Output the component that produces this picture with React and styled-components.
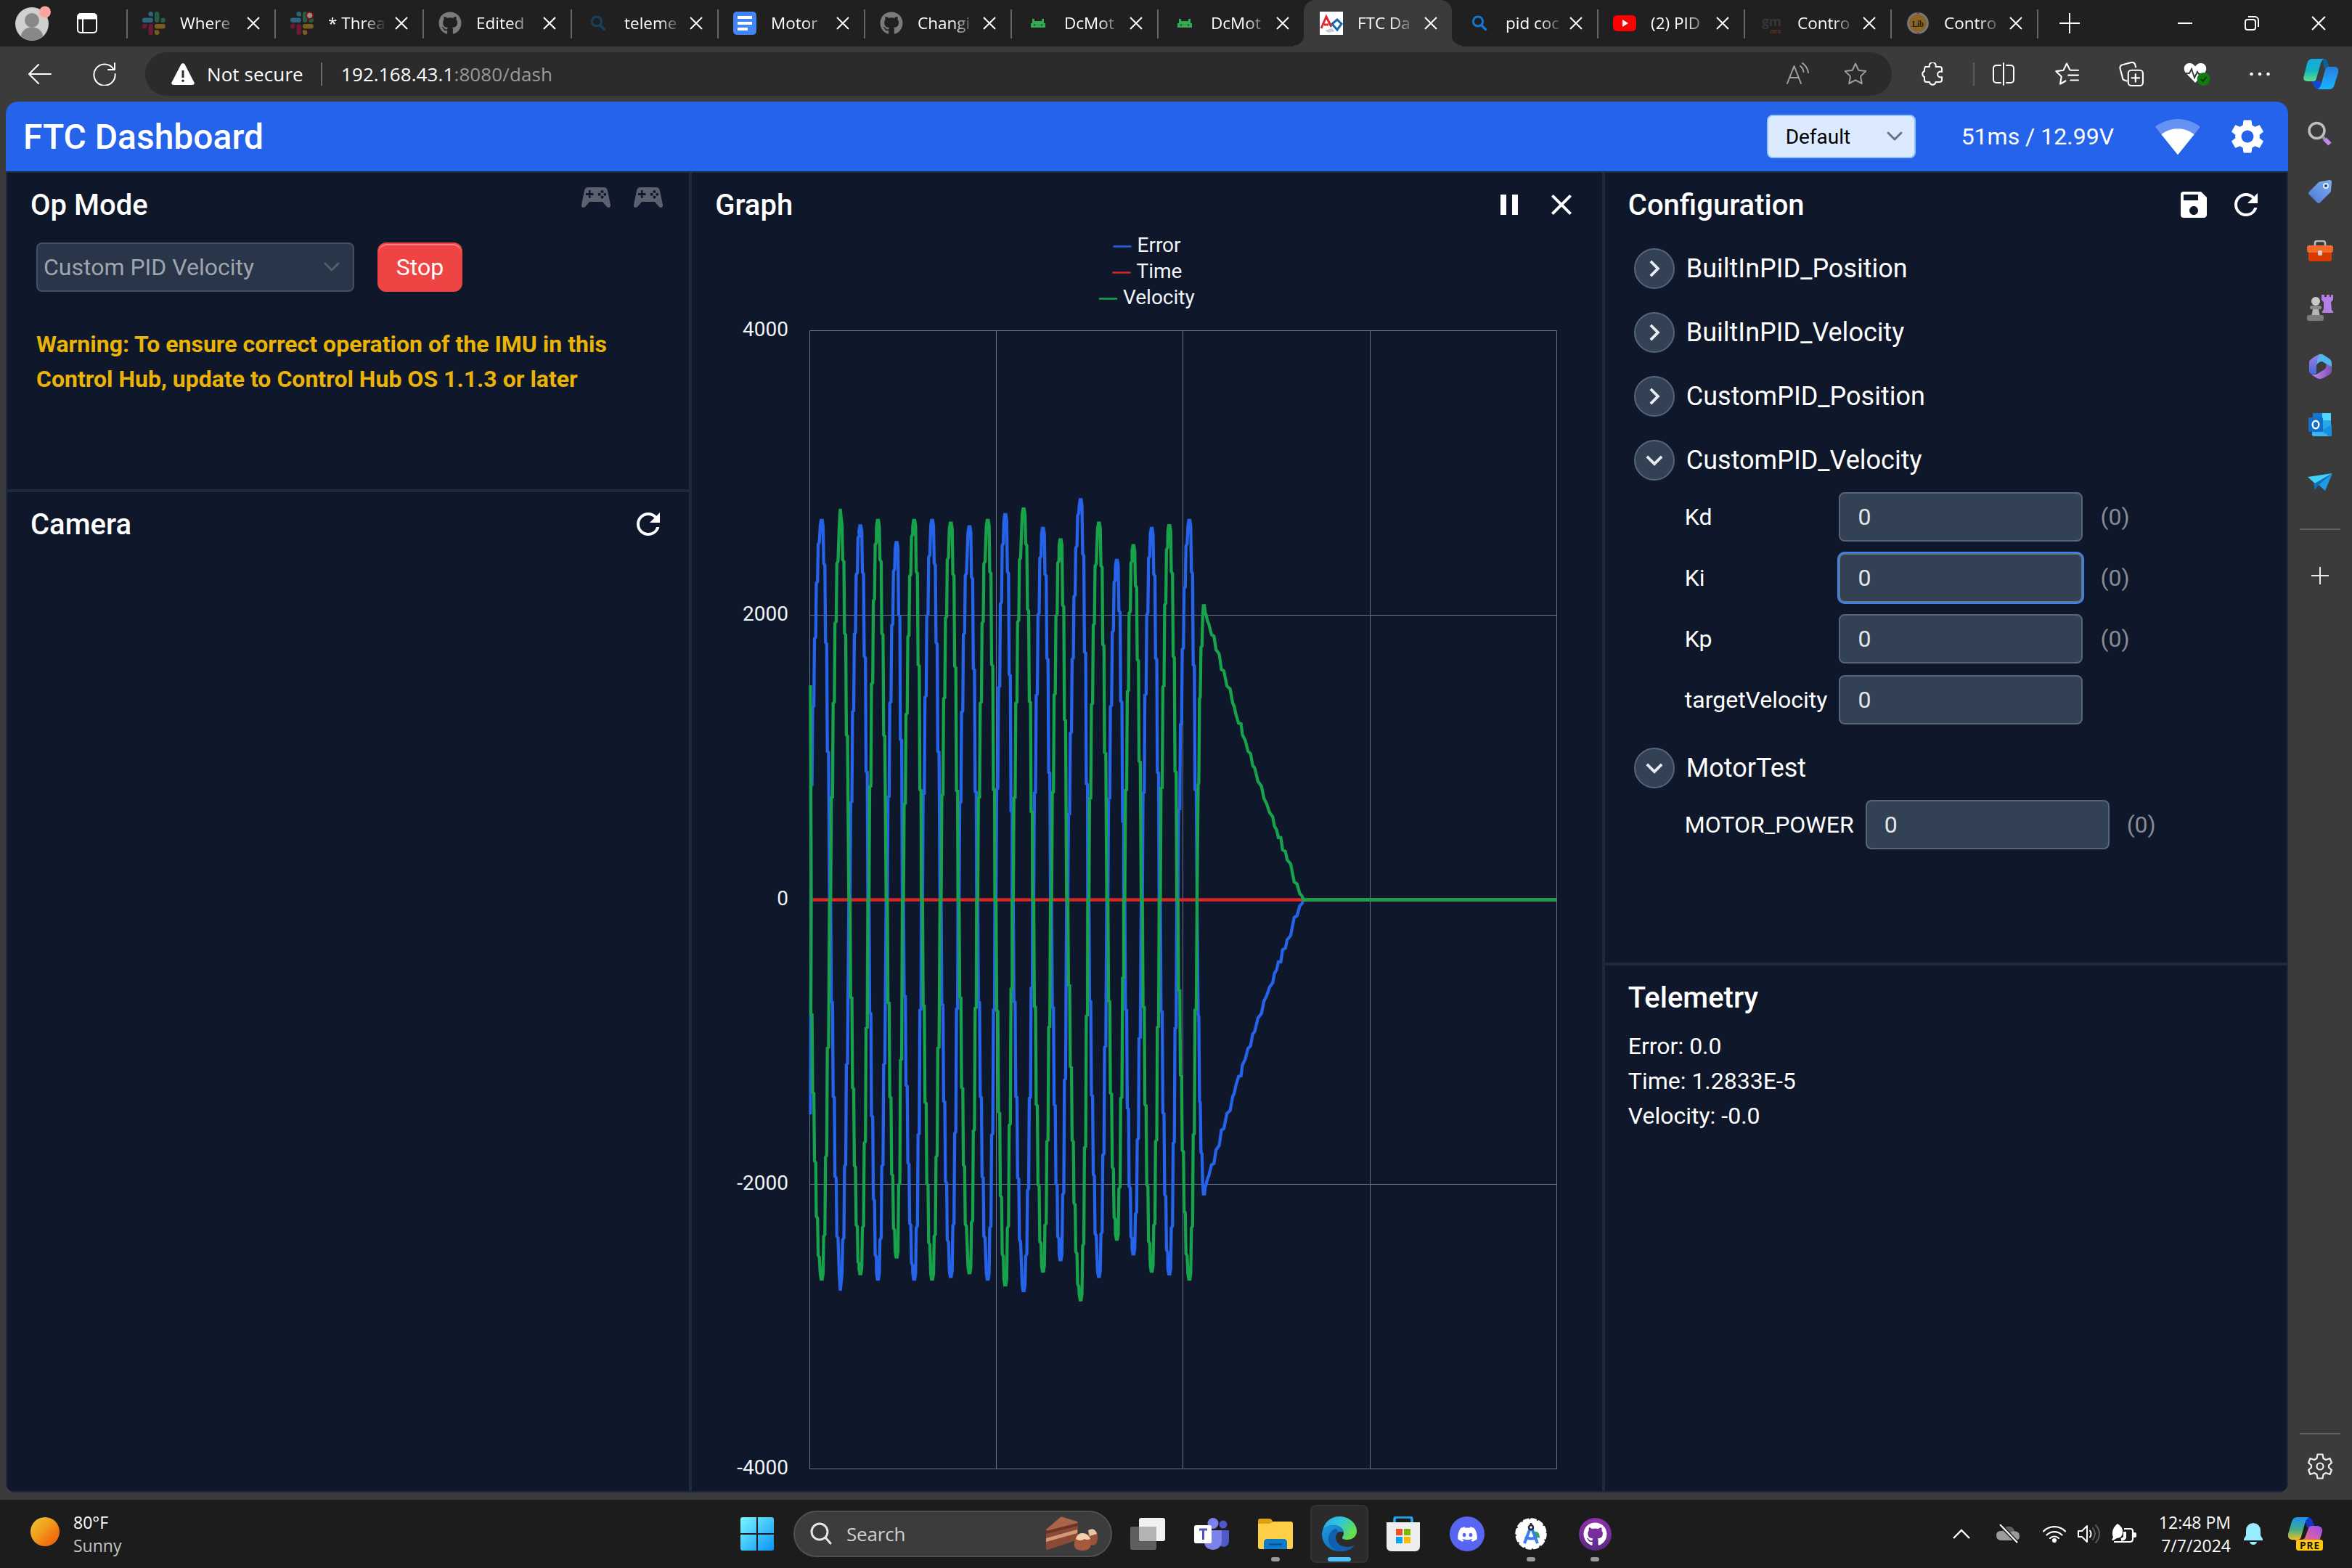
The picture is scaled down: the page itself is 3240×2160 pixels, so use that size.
import React from "react";
import styled, { createGlobalStyle, css } from "styled-components";
import {
  MdSettings,
  MdRefresh,
  MdSave,
  MdPause,
  MdClose,
  MdChevronRight,
  MdExpandMore,
} from "react-icons/md";
import { FaGithub, FaDiscord } from "react-icons/fa";

/* ---------- tokens ---------- */

const system = `"Segoe UI", "Open Sans", "Noto Sans", sans-serif`;
const roboto = `Roboto, "Liberation Sans", sans-serif`;

const c = {
  strip: "#202020",
  chrome: "#3b3b3b",
  field: "#2b2b2b",
  page: "#0f172a",
  line: "#1e293b",
  blue: "#2563eb",
  red: "#dc2626",
  green: "#16a34a",
  control: "#334155",
  controlLine: "#55657c",
  task: "#1c1c1c",
};

const Global = createGlobalStyle`
  *, *::before, *::after { box-sizing: border-box; }
  html, body { margin: 0; background: ${c.chrome}; overflow: hidden; }
  svg { display: block; flex: none; }
`;

const Screen = styled.div`
  width: 3240px;
  height: 2160px;
  display: flex;
  flex-direction: column;
  background: ${c.chrome};
  color: #fff;
  font-family: ${system};
`;

/* ---------- tab strip ---------- */

const Strip = styled.div`
  height: 64px;
  flex: none;
  display: flex;
  background: ${c.strip};
`;

const StripLead = styled.div`
  width: 174px;
  display: flex;
  align-items: center;
  padding-left: 20px;
  gap: 36px;
`;

const TabItem = styled.div`
  position: relative;
  width: ${(p) => p.$w}px;
  display: flex;
  align-items: center;
  padding: 0 20px 0 22px;
  ${(p) =>
    p.$active &&
    css`
      background: ${c.chrome};
      border-radius: 16px 16px 0 0;
      &::before,
      &::after {
        content: "";
        position: absolute;
        bottom: 0;
        width: 14px;
        height: 16px;
      }
      &::before {
        left: -14px;
        background: radial-gradient(circle at 0 0, transparent 14px, ${c.chrome} 15px);
      }
      &::after {
        right: -14px;
        background: radial-gradient(circle at 100% 0, transparent 14px, ${c.chrome} 15px);
      }
    `}
  ${(p) =>
    p.$rule &&
    css`
      background: linear-gradient(#666, #666) 0 13px / 2px 40px no-repeat;
    `}
`;

const TabLabel = styled.div`
  flex: 1;
  min-width: 0;
  margin: 0 12px 0 20px;
  white-space: nowrap;
  font-size: 22.5px;
  line-height: 32px;
  mask-image: linear-gradient(90deg, #000 48px, transparent 80px);
`;

const StripTail = styled.div`
  flex: 1;
  display: flex;
  align-items: center;
  background: linear-gradient(#666, #666) 0 13px / 2px 40px no-repeat;
`;

const WindowButtons = styled.div`
  margin-left: auto;
  display: flex;
  & > span {
    width: 92px;
    height: 64px;
    display: grid;
    place-items: center;
  }
`;

const NewTab = styled.span`
  width: 90px;
  display: grid;
  place-items: center;
`;

const CloseX = ({ size = 18, w = 2 }) => (
  <svg width={size} height={size} viewBox="0 0 18 18" stroke="#fff" strokeWidth={w} fill="none">
    <path d="M1 1 17 17M17 1 1 17" />
  </svg>
);

const Slack = ({ badge }) => (
  <svg width="32" height="32" viewBox="0 0 54 54">
    <path fill="#2b677c" d="M19.712.133a5.381 5.381 0 0 0-5.376 5.387 5.381 5.381 0 0 0 5.376 5.386h5.376V5.52A5.381 5.381 0 0 0 19.712.133m0 14.365H5.376A5.381 5.381 0 0 0 0 19.884a5.381 5.381 0 0 0 5.376 5.387h14.336a5.381 5.381 0 0 0 5.376-5.387 5.381 5.381 0 0 0-5.376-5.386" />
    <path fill="#245f45" d="M53.76 19.884a5.381 5.381 0 0 0-5.376-5.386 5.381 5.381 0 0 0-5.376 5.386v5.387h5.376a5.381 5.381 0 0 0 5.376-5.387m-14.336 0V5.52A5.381 5.381 0 0 0 34.048.133a5.381 5.381 0 0 0-5.376 5.387v14.364a5.381 5.381 0 0 0 5.376 5.387 5.381 5.381 0 0 0 5.376-5.387" />
    <path fill="#7a5c20" d="M34.048 54a5.381 5.381 0 0 0 5.376-5.387 5.381 5.381 0 0 0-5.376-5.386h-5.376v5.386A5.381 5.381 0 0 0 34.048 54m0-14.365h14.336a5.381 5.381 0 0 0 5.376-5.386 5.381 5.381 0 0 0-5.376-5.387H34.048a5.381 5.381 0 0 0-5.376 5.387 5.381 5.381 0 0 0 5.376 5.386" />
    <path fill="#6f1938" d="M0 34.249a5.381 5.381 0 0 0 5.376 5.386 5.381 5.381 0 0 0 5.376-5.386v-5.387H5.376A5.381 5.381 0 0 0 0 34.25m14.336-.001v14.364A5.381 5.381 0 0 0 19.712 54a5.381 5.381 0 0 0 5.376-5.387V34.25a5.381 5.381 0 0 0-5.376-5.387 5.381 5.381 0 0 0-5.376 5.387" />
    {badge && <circle cx="45" cy="9" r="8" fill="#909090" stroke="#7c1416" strokeWidth="4" />}
  </svg>
);

const SearchFav = ({ color }) => (
  <svg width="32" height="32" viewBox="0 0 32 32" fill="none" stroke={color} strokeWidth="3">
    <circle cx="14" cy="13.5" r="6.6" />
    <path d="m18.5 18.5 7 7" strokeWidth="3.4" />
  </svg>
);

const Docs = () => (
  <svg width="32" height="32" viewBox="0 0 32 32">
    <rect width="32" height="32" rx="5" fill="#4285f4" />
    <path d="M6 8h20M6 16h20M6 24h14" stroke="#fff" strokeWidth="4" />
  </svg>
);

const Android = () => (
  <svg width="32" height="32" viewBox="0 0 32 32" fill="#34a853">
    <path d="M8 10h3v3h10v-3h3v6h2v6H6v-6h2z" />
    <path d="M11 17v3M21 17v3" stroke="#1d6b35" strokeWidth="2" />
  </svg>
);

const Ftc = () => (
  <svg width="32" height="32" viewBox="0 0 32 32" fill="none">
    <rect width="32" height="32" fill="#fff" />
    <path d="M7 26 17 23l4 4-9 2z" fill="#c9cdd2" />
    <path d="M2 23 9 7l7 14M6 18h6" stroke="#e0262c" strokeWidth="3" />
    <path d="m24 11 6 6-6 8-7-8z" stroke="#1466ad" strokeWidth="3" />
  </svg>
);

const YouTube = () => (
  <svg width="32" height="32" viewBox="0 0 32 32">
    <rect y="5" width="32" height="22" rx="6" fill="#f00" />
    <path d="m13 11 8 5-8 5z" fill="#fff" />
  </svg>
);

const Gm = () => (
  <svg width="32" height="32" viewBox="0 0 32 32" fontFamily="Open Sans, sans-serif" fontWeight="700">
    <text x="3" y="20" fontSize="18" textLength="27" lengthAdjust="spacingAndGlyphs" fill="#373737">gm</text>
    <text x="14" y="30" fontSize="8" textLength="15" lengthAdjust="spacingAndGlyphs" fill="#5c3420">zero</text>
  </svg>
);

const Lib = () => (
  <svg width="32" height="32" viewBox="0 0 32 32" fontFamily="Liberation Serif, serif" fontWeight="700">
    <circle cx="16" cy="16" r="13.4" fill="#8b6426" stroke="#777" strokeWidth="3" />
    <text x="8" y="21" fontSize="13" textLength="16" lengthAdjust="spacingAndGlyphs" fill="#211a10">Lib</text>
    <path d="m16 0 2 3h-4zM16 32l2-3h-4z" fill="#7c3434" />
  </svg>
);

const GithubFav = () => <FaGithub size={32} color="#7b7b7b" />;

const tabs = [
  { icon: <Slack />, label: "Where", w: 204 },
  { icon: <Slack badge />, label: "* Threa", w: 204 },
  { icon: <GithubFav />, label: "Edited", w: 204 },
  { icon: <SearchFav color="#17415f" />, label: "teleme", w: 202 },
  { icon: <Docs />, label: "Motor", w: 202 },
  { icon: <GithubFav />, label: "Changi", w: 202 },
  { icon: <Android />, label: "DcMot", w: 202 },
  { icon: <Android />, label: "DcMot", w: 202 },
  { icon: <Ftc />, label: "FTC Da", w: 204, active: true },
  { icon: <SearchFav color="#1177cf" />, label: "pid coc", w: 200 },
  { icon: <YouTube />, label: "(2) PID", w: 202 },
  { icon: <Gm />, label: "Contro", w: 202 },
  { icon: <Lib />, label: "Contro", w: 202 },
];

const TabStrip = () => (
  <Strip>
    <StripLead>
      <svg width="50" height="50" viewBox="0 0 50 50">
        <circle cx="24" cy="26" r="23" fill="#d2d0ce" />
        <circle cx="24" cy="21" r="10" fill="#8a8886" />
        <path d="M9 43a15 12.500 0 0 1 30 0 23 23 0 0 1-30 0" fill="#8a8886" />
        <circle cx="42" cy="9.500" r="8" fill="#faa69f" />
      </svg>
      <svg width="28" height="28" viewBox="0 0 28 28" fill="none" stroke="#fff" strokeWidth="2">
        <rect x="1" y="1" width="26" height="26" rx="4" />
        <path d="M2 5h24" strokeWidth="7" />
        <path d="M8 8v19" />
      </svg>
    </StripLead>
    {tabs.map((t, i) => (
      <TabItem key={i} $w={t.w} $active={t.active} $rule={!t.active && !tabs[i - 1]?.active}>
        {t.icon}
        <TabLabel>{t.label}</TabLabel>
        <CloseX />
      </TabItem>
    ))}
    <StripTail>
      <NewTab>
        <svg width="28" height="28" viewBox="0 0 28 28" stroke="#fff" strokeWidth="2">
          <path d="M14 0v28M0 14h28" />
        </svg>
      </NewTab>
      <WindowButtons>
        <span>
          <svg width="20" height="20" viewBox="0 0 20 20" stroke="#fff" strokeWidth="2">
            <path d="M0 10h20" />
          </svg>
        </span>
        <span>
          <svg width="20" height="20" viewBox="0 0 20 20" fill="none" stroke="#fff" strokeWidth="2">
            <rect x="1" y="5" width="14" height="14" rx="3" />
            <path d="M5 1h9a5 5 0 0 1 5 5v9" />
          </svg>
        </span>
        <span>
          <CloseX size={20} w={1.9} />
        </span>
      </WindowButtons>
    </StripTail>
  </Strip>
);

/* ---------- toolbar ---------- */

const Bar = styled.div`
  height: 76px;
  flex: none;
  display: flex;
  align-items: center;
`;

const BarCell = styled.div`
  width: ${(p) => p.$w}px;
  display: grid;
  place-items: center;
`;

const Address = styled.div`
  width: 2407px;
  height: 60px;
  border-radius: 30px;
  background: ${c.field};
  display: flex;
  align-items: center;
  padding: 0 11px 0 36px;
  font-size: 26px;
`;

const Secure = styled.span`
  width: 158px;
  margin-left: 17px;
  margin-right: -1px;
  white-space: nowrap;
  letter-spacing: 0.1px;
`;

const Upright = styled.i`
  width: 2px;
  height: 32px;
  background: ${(p) => p.$color || "#6b6b6b"};
`;

const Url = styled.span`
  flex: 1;
  margin-left: 26px;
  letter-spacing: 0.1px;
  em {
    font-style: normal;
    color: #9a9a9a;
  }
`;

const starPath = "M16 1.6l4.300 9.200 10 1.300-7.300 7 1.800 10.100L16 24.400l-8.800 4.800L9 19.100l-7.300-7 10-1.300z";

const Line32 = ({ children, color = "#fff", w = 2, size = 32 }) => (
  <svg width={size} height={size} viewBox="0 0 32 32" fill="none" stroke={color} strokeWidth={w} strokeLinecap="round" strokeLinejoin="round">
    {children}
  </svg>
);

const CopilotMark = () => (
  <svg width="50" height="44" viewBox="0 0 50 44">
    <defs>
      <linearGradient id="cpA" x1="0" y1="0" x2="0" y2="1">
        <stop offset="0" stopColor="#15a8e6" />
        <stop offset=".5" stopColor="#12b5c4" />
        <stop offset="1" stopColor="#5fdc8a" />
      </linearGradient>
      <linearGradient id="cpB" x1="0" y1="0" x2="0" y2="1">
        <stop offset="0" stopColor="#2a7de0" />
        <stop offset="1" stopColor="#17b5fb" />
      </linearGradient>
    </defs>
    <path d="M28 1c5 0 6 3 7 6l2 6-8 1z" fill="#0f5f98" />
    <path d="M12 31h10c2 0 3 1 4 3l-2 9h-3c-4 0-6-5-9-12" fill="#1947d1" />
    <path d="M13 1h17c-4 1-5 6-7 13l-4 14c-1 3-2 4-5 4H7c-5 0-7-3-5-8L6 8c1-4 3-7 7-7" fill="url(#cpA)" />
    <path d="M37 43H20c4-1 5-5 7-12l4-15c1-3 2-4 5-4h7c5 0 7 3 6 8l-5 16c-1 4-3 7-7 7" fill="url(#cpB)" />
  </svg>
);

const Toolbar = () => (
  <Bar>
    <BarCell $w={110}>
      <svg width="32" height="28" viewBox="0 0 32 28" fill="none" stroke="#fff" strokeWidth="2" strokeLinecap="round" strokeLinejoin="round">
        <path d="M31 14H1M14 1 1 14l13 13" />
      </svg>
    </BarCell>
    <BarCell $w={68}>
      <Line32>
        <path d="M28.500 9.500A14.600 14.600 0 1 0 30.600 16M30 1v9h-9" />
      </Line32>
    </BarCell>
    <BarCell $w={22} />
    <Address>
      <svg width="32" height="30" viewBox="0 0 32 30">
        <path d="M13.500 1.500a3 3 0 0 1 5 0l13 25a2.400 2.400 0 0 1-2 3.500h-27a2.400 2.400 0 0 1-2-3.500z" fill="#fff" />
        <path d="M16 10v10" stroke={c.field} strokeWidth="3" />
        <circle cx="16" cy="24.200" r="1.800" fill={c.field} />
      </svg>
      <Secure>Not secure</Secure>
      <Upright />
      <Url>
        192.168.43.1<em>:8080/dash</em>
      </Url>
      <BarCell $w={79}>
        <Line32 color="#a0a0a0">
          <path d="M1 29 10.500 5 20 29M4.500 21h12M19 5q4 3 4.500 8M22 1q7 5 8 13" />
        </Line32>
      </BarCell>
      <BarCell $w={79}>
        <Line32 color="#a0a0a0">
          <path d={starPath} />
        </Line32>
      </BarCell>
    </Address>
    <BarCell $w={112}>
      <Line32>
        <path d="M6 6h6a4.500 4.500 0 1 1 8.500 0H26a3 3 0 0 1 3 3v4a4 4 0 1 0 0 7v4a3 3 0 0 1-3 3h-5.500a4.300 4.300 0 0 1-8.500 0H8a3 3 0 0 1-3-3v-4a4.300 4.300 0 0 1 0-8V9z" />
      </Line32>
    </BarCell>
    <Upright $color="#5c5c5c" />
    <BarCell $w={80}>
      <Line32>
        <path d="M12 4H6a4 4 0 0 0-4 4v16a4 4 0 0 0 4 4h6M20 4h6a4 4 0 0 1 4 4v16a4 4 0 0 1-4 4h-6M16 1v30" />
      </Line32>
    </BarCell>
    <BarCell $w={94}>
      <Line32 size={34}>
        <path d="M20 10.500 16 2.200l-4.200 8.900-9.600 1.300 7 6.800-1.700 9.700 7-4M21 11h10M18 17.500h13M21 24h10" />
      </Line32>
    </BarCell>
    <BarCell $w={84}>
      <Line32 size={34}>
        <rect x="12" y="11" width="19" height="20" rx="4" />
        <path d="M21.500 16v10M16.500 21h10M10 25l-3-1a4 4 0 0 1-2.500-4L1.500 9a4 4 0 0 1 3-5L16 1a4 4 0 0 1 5 3l.8 3" />
      </Line32>
    </BarCell>
    <BarCell $w={95}>
      <svg width="38" height="34" viewBox="0 0 38 34">
        <path d="M17 29 4 15.500C-1 9 3 2 9 2c4 0 6 2 8 4.500C19 4 21 2 25 2c6 0 10 7 5 13.500z" fill="#fff" />
        <path d="M1 16h8l3-6 4 12 4-8 2 3h10" fill="none" stroke={c.chrome} strokeWidth="2" />
        <circle cx="28.500" cy="24" r="9" fill="#107c10" />
        <path d="m24.500 24 3 3 5-6" fill="none" stroke="#0a3d0a" strokeWidth="2" />
      </svg>
    </BarCell>
    <BarCell $w={80}>
      <Line32>
        <path d="M4.500 16h.01M16 16h.01M27.500 16h.01" strokeWidth="4.600" />
      </Line32>
    </BarCell>
    <BarCell $w={87}>
      <CopilotMark />
    </BarCell>
  </Bar>
);

/* ---------- dashboard ---------- */

const Body = styled.div`
  height: 1926px;
  flex: none;
  display: flex;
  padding: 0 0 10px 8px;
`;

const Dash = styled.div`
  width: 3144px;
  height: 1916px;
  display: flex;
  flex-direction: column;
  border-radius: 16px 16px 14px 14px;
  overflow: hidden;
  background: ${c.page};
  font-family: ${roboto};
`;

const DashHeader = styled.header`
  height: 96px;
  flex: none;
  display: flex;
  align-items: center;
  padding: 0 28px 0 24px;
  background: ${c.blue};
  h1 {
    margin: 0;
    flex: 1;
    font-size: 48px;
    font-weight: 500;
  }
`;

const Picker = styled.div`
  display: flex;
  align-items: center;
  justify-content: space-between;
  border-radius: 8px;
  ${(p) =>
    p.$dark
      ? css`
          width: 438px;
          height: 68px;
          padding: 0 17px 0 8px;
          font-size: 32px;
          color: #9fa5ae;
          background: #293548;
          border: 2px solid #444f61;
        `
      : css`
          width: 205px;
          height: 60px;
          padding: 0 15px 0 24px;
          font-size: 28px;
          color: #000;
          background: #dbeafe;
          border: 2px solid #93c5fd;
        `}
`;

const Ping = styled.span`
  margin: 0 56px 0 63px;
  font-size: 32px;
`;

const Columns = styled.div`
  flex: 1;
  min-height: 0;
  display: grid;
  grid-template-columns: 30% 40% 30%;
`;

const Column = styled.div`
  display: flex;
  flex-direction: column;
  min-height: 0;
`;

const Panel = styled.section`
  border: 2px solid ${c.line};
  padding: 16px 32px 0;
  ${(p) => (p.$h ? `height: ${p.$h}px; flex: none;` : "flex: 1; min-height: 0;")}
`;

const PanelHead = styled.div`
  height: 56px;
  display: flex;
  align-items: center;
  gap: 24px;
  h2 {
    margin: 0;
    flex: 1;
    font-size: 40px;
    font-weight: 500;
  }
`;

const Pads = styled.div`
  display: flex;
  gap: 32px;
  margin: -20px 4px 0 0;
`;

const OpRow = styled.div`
  display: flex;
  gap: 32px;
  padding: 24px 8px 0;
`;

const StopButton = styled.button`
  width: 117px;
  height: 68px;
  border: 2px solid #ef4444;
  border-radius: 12px;
  background: #ef4444;
  box-shadow: inset 0 2px 0 #fb8080;
  color: #fff;
  font: 400 32px ${roboto};
  padding: 0;
`;

const Warning = styled.p`
  margin: 48px 0 0 8px;
  width: 800px;
  font-size: 32px;
  line-height: 48px;
  font-weight: 700;
  color: #eab308;
`;

const Caret = ({ color }) => (
  <svg width="24" height="16" viewBox="0 0 24 16" fill="none" stroke={color} strokeWidth="3" strokeLinecap="round" strokeLinejoin="round">
    <path d="m3 3 9 9 9-9" />
  </svg>
);

const Gamepad = () => (
  <svg width="40" height="28" viewBox="0 0 40 28">
    <path
      fillRule="evenodd"
      fill="#5a606d"
      d="M9 0h22c3 0 4.500 2 5 5l4 19c.3 2-.5 4-2.500 4-1.500 0-2.500-1-3.500-2l-5-6H11l-5 6c-1 1-2 2-3.500 2C.5 28-.3 26 0 24L4 5C4.500 2 6 0 9 0m1 4v4H6v3h4v4h2.500v-4h4V8h-4V4zm18.500 0a2 2 0 1 0 0 4 2 2 0 0 0 0-4m-3.800 3.800a2 2 0 1 0 0 4 2 2 0 0 0 0-4m7.600 0a2 2 0 1 0 0 4 2 2 0 0 0 0-4m-3.800 3.700a2 2 0 1 0 0 4 2 2 0 0 0 0-4"
    />
  </svg>
);

/* ---------- graph ---------- */

const GraphBox = styled.div`
  margin: 2px 0 0 -32px;
  width: 1253px;
  height: 1730px;
`;

/* Velocity trace: alternating zero crossings and extremes, in trace units. */
const crossings = [71, 131, 186, 240, 292, 338, 392, 445, 496, 549, 601, 650, 708, 759, 805, 865, 919, 967, 1017, 1068, 1118, 1174];
const extremes = [
  [107, -1366], [161, 1366], [217, -1346], [267, 1366], [320, -1286], [370, 1366], [421, -1366],
  [474, 1356], [527, -1343], [579, 1366], [629, -1387], [681, 1407], [736, -1337], [786, 1296],
  [843, -1440], [895, 1356], [946, -1222], [993, 1275], [1045, -1337], [1095, 1347], [1152, -1366],
];
const runDown = [
  [1174, 0], [1177, 414], [1179, 420], [1181, 724], [1183, 730], [1185, 909], [1188, 914], [1190, 1024], [1192, 1059],
  [1195, 1059], [1197, 1034], [1200, 1024], [1204, 1002], [1207, 995], [1215, 954], [1222, 949], [1228, 900], [1233, 892],
  [1237, 884], [1243, 829], [1250, 824], [1259, 769], [1268, 759], [1275, 709], [1280, 695], [1284, 670], [1292, 636],
  [1299, 634], [1303, 594], [1311, 574], [1319, 534], [1326, 526], [1332, 484], [1338, 474], [1347, 426], [1357, 409],
  [1364, 365], [1372, 345], [1380, 314], [1389, 299], [1394, 265], [1400, 252], [1405, 224], [1412, 224], [1417, 180],
  [1425, 174], [1430, 144], [1440, 129], [1450, 64], [1458, 57], [1466, 22], [1472, 14], [1476, 0], [2195, 0],
];

function buildTrace() {
  const pts = [[75, 772], [77, 0]];
  const wave = (x) => {
    for (let i = 0; i < extremes.length; i++) {
      const [ex, amp] = extremes[i];
      const a = crossings[i];
      const b = crossings[i + 1];
      if (x >= a && x <= b) {
        const t = x < ex ? (ex - x) / (ex - a) : (x - ex) / (b - ex);
        return amp * Math.cos((t * Math.PI) / 2);
      }
    }
    return 0;
  };
  for (let i = 0; i < extremes.length; i++) {
    const [ex, amp] = extremes[i];
    const from = Math.max(crossings[i], 78);
    const to = crossings[i + 1];
    for (let x = from; x < ex - 5; x += 5.2) {
      pts.push([x - 1.7, wave(x)], [x + 1.7, wave(x) * 1.006]);
    }
    pts.push([ex - 4, amp * 0.985]);
    if (i === 1) {
      pts.push([ex - 1, amp * 1.03]);
    } else {
      pts.push([ex - 1.5, amp], [ex + 1.5, amp]);
    }
    pts.push([ex + 4, amp * 0.985]);
    for (let x = ex + 7.5; x < to - 2; x += 5.2) {
      pts.push([x - 1.7, wave(x) * 1.006], [x + 1.7, wave(x)]);
    }
  }
  return pts.concat(runDown);
}

const trace = buildTrace();
const ORIGIN_X = 953;
const ORIGIN_Y = 312;
const ZERO = 1239.5 - ORIGIN_Y;
const toPath = (sign) =>
  trace
    .map(([x, v], i) => {
      const px = Math.min(1080 + x / 2.0632, 2144) - ORIGIN_X;
      const py = ZERO - (sign * v) / 2.6133;
      return `${i ? "L" : "M"}${px.toFixed(1)} ${py.toFixed(1)}`;
    })
    .join("");

const gridX = [0, 1, 2, 3, 4].map((i) => Math.round(1115 - ORIGIN_X + i * 257.2) + 0.5);
const gridY = [4000, 2000, 0, -2000, -4000].map((v) => ({ v, y: ZERO - (v * 392) / 2000 }));

const legend = [
  { name: "Error", color: c.blue, w: 60 },
  { name: "Time", color: c.red, w: 62 },
  { name: "Velocity", color: c.green, w: 99 },
];

const Chart = () => (
  <svg width="1253" height="1730" viewBox="0 0 1253 1730" fontFamily={roboto} fontSize="28" fill="#f1f5f9">
    {legend.map((l, i) => {
      const left = 627 - (l.w + 33) / 2;
      return (
        <g key={l.name}>
          <path d={`M${left} ${27.5 + i * 36}h25`} stroke={l.color} strokeWidth="2.5" />
          <text x={left + 33} y={35 + i * 36}>{l.name}</text>
        </g>
      );
    })}
    <g stroke="#64748b" strokeWidth="1">
      {gridX.map((x) => (
        <path key={x} d={`M${x} ${gridY[0].y}V${gridY[4].y}`} />
      ))}
      {gridY.map((g) => (
        <path key={g.v} d={`M${gridX[0]} ${g.y}H${gridX[4]}`} />
      ))}
    </g>
    {gridY.map((g) => (
      <text key={g.v} x="133" y={g.y + 7.5} textAnchor="end">{g.v}</text>
    ))}
    <g fill="none" strokeWidth="4.3" strokeLinejoin="miter" strokeMiterlimit="5">
      <path d={toPath(-1)} stroke={c.blue} />
      <path d={`M${gridX[0]} ${ZERO}H${gridX[4]}`} stroke={c.red} />
      <path d={toPath(1)} stroke={c.green} />
    </g>
  </svg>
);

/* ---------- configuration ---------- */

const Sections = styled.div`
  display: flex;
  flex-direction: column;
  padding: 32px 0 0 8px;
`;

const SectionHead = styled.div`
  height: 56px;
  display: flex;
  align-items: center;
  gap: 16px;
  font-size: 36px;
  margin-bottom: ${(p) => (p.$open ? 8 : 32)}px;
`;

const Round = styled.span`
  width: 56px;
  height: 56px;
  border-radius: 50%;
  border: 2px solid ${c.controlLine};
  background: ${c.control};
  color: #e8edf3;
  display: grid;
  place-items: center;
`;

const Vars = styled.div`
  display: grid;
  grid-template-columns: max-content 336px auto;
  grid-auto-rows: 84px;
  align-items: center;
  margin: 0 0 24px 70px;
  font-size: 32px;
`;

const VarName = styled.span`
  padding-right: 16px;
`;

const Field = styled.span`
  height: 68px;
  display: flex;
  align-items: center;
  padding-left: 24px;
  border-radius: 8px;
  border: 2px solid ${c.controlLine};
  background: ${c.control};
  color: #e5e7eb;
  ${(p) => p.$focus && `border-color: #64748b; box-shadow: 0 0 0 2px #3b82f6;`}
`;

const Default = styled.span`
  padding-left: 24px;
  color: #868b95;
`;

const config = [
  { name: "BuiltInPID_Position" },
  { name: "BuiltInPID_Velocity" },
  { name: "CustomPID_Position" },
  {
    name: "CustomPID_Velocity",
    vars: [
      { name: "Kd", value: "0", initial: "(0)" },
      { name: "Ki", value: "0", initial: "(0)", focus: true },
      { name: "Kp", value: "0", initial: "(0)" },
      { name: "targetVelocity", value: "0", initial: "" },
    ],
  },
  { name: "MotorTest", vars: [{ name: "MOTOR_POWER", value: "0", initial: "(0)" }] },
];

const Telemetry = styled.div`
  padding-top: 15px;
  font-size: 32px;
  line-height: 48px;
`;

const Dashboard = () => (
  <Dash>
    <DashHeader>
      <h1>FTC Dashboard</h1>
      <Picker>
        Default
        <Caret color="#6b7280" />
      </Picker>
      <Ping>51ms / 12.99V</Ping>
      <svg width="64" height="64" viewBox="0 0 24 24" fill="#fff">
        <path fillOpacity=".3" d="M12.010 21.490L23.640 7c-.45-.34-4.930-4-11.640-4C5.280 3 .81 6.660.36 7l11.630 14.490.01.01.01-.01z" />
        <path d="M3.530 10.950l8.460 10.540.01.01.01-.01 8.460-10.540C20.040 10.620 16.810 8 12 8c-4.810 0-8.040 2.620-8.470 2.950z" />
      </svg>
      <BarCell $w={36} />
      <MdSettings size={56} />
    </DashHeader>
    <Columns>
      <Column>
        <Panel $h={440}>
          <PanelHead>
            <h2>Op Mode</h2>
            <Pads>
              <Gamepad />
              <Gamepad />
            </Pads>
          </PanelHead>
          <OpRow>
            <Picker $dark>
              Custom PID Velocity
              <Caret color="#535d6c" />
            </Picker>
            <StopButton>Stop</StopButton>
          </OpRow>
          <Warning>
            Warning: To ensure correct operation of the IMU in this
            <br />
            Control Hub, update to Control Hub OS 1.1.3 or later
          </Warning>
        </Panel>
        <Panel>
          <PanelHead>
            <h2>Camera</h2>
            <MdRefresh size={48} />
          </PanelHead>
        </Panel>
      </Column>
      <Column>
        <Panel>
          <PanelHead>
            <h2>Graph</h2>
            <MdPause size={48} />
            <MdClose size={48} />
          </PanelHead>
          <GraphBox>
            <Chart />
          </GraphBox>
        </Panel>
      </Column>
      <Column>
        <Panel $h={1092}>
          <PanelHead>
            <h2>Configuration</h2>
            <MdSave size={48} />
            <MdRefresh size={48} />
          </PanelHead>
          <Sections>
            {config.map((s) => (
              <React.Fragment key={s.name}>
                <SectionHead $open={!!s.vars}>
                  <Round>{s.vars ? <MdExpandMore size={46} /> : <MdChevronRight size={46} />}</Round>
                  {s.name}
                </SectionHead>
                {s.vars && (
                  <Vars>
                    {s.vars.map((v) => (
                      <React.Fragment key={v.name}>
                        <VarName>{v.name}</VarName>
                        <Field $focus={v.focus}>{v.value}</Field>
                        <Default>{v.initial}</Default>
                      </React.Fragment>
                    ))}
                  </Vars>
                )}
              </React.Fragment>
            ))}
          </Sections>
        </Panel>
        <Panel>
          <PanelHead>
            <h2>Telemetry</h2>
          </PanelHead>
          <Telemetry>
            <div>Error: 0.0</div>
            <div>Time: 1.2833E-5</div>
            <div>Velocity: -0.0</div>
          </Telemetry>
        </Panel>
      </Column>
    </Columns>
  </Dash>
);

/* ---------- sidebar ---------- */

const Side = styled.div`
  flex: 1;
  display: flex;
  flex-direction: column;
  align-items: center;
  padding-top: 4px;
`;

const SideCell = styled.div`
  height: ${(p) => p.$h || 80}px;
  padding-top: ${(p) => p.$drop || 0}px;
  display: grid;
  place-items: center;
`;

const SideRule = styled.i`
  width: 56px;
  height: 2px;
  background: #606060;
`;

const Push = styled.div`
  flex: 1;
`;

const Sidebar = () => (
  <Side>
    <SideCell>
      <svg width="34" height="34" viewBox="0 0 34 34" fill="none">
        <circle cx="12.500" cy="13" r="10.500" stroke="#bdbdbd" strokeWidth="3.600" />
        <path d="m21 22 2.500 2.500" stroke="#9a9a9a" strokeWidth="4" />
        <path d="m23.500 24.500 7 7" stroke="#c08af0" strokeWidth="6" />
      </svg>
    </SideCell>
    <SideCell>
      <svg width="34" height="34" viewBox="0 0 34 34">
        <defs>
          <linearGradient id="tag" x1="1" y1="0" x2="0" y2="1">
            <stop offset="0" stopColor="#7fb0f5" />
            <stop offset="1" stopColor="#4a78d0" />
          </linearGradient>
        </defs>
        <path d="M18 3 30 1q3 0 3 3l-1 11q0 2-1 3L17 32q-2 2-4 0L2 21q-2-2 0-4L15 4z" fill="url(#tag)" />
        <circle cx="25" cy="9" r="3" fill="#27406e" stroke="#e8eefc" strokeWidth="2" />
      </svg>
    </SideCell>
    <SideCell $drop={3}>
      <svg width="36" height="30" viewBox="0 3 36 30">
        <path d="M11 11V7q0-3 3-3h8q3 0 3 3v4" fill="none" stroke="#b9b9b9" strokeWidth="2.600" />
        <rect x="2" y="14" width="32" height="18" rx="3" fill="#d83b01" />
        <rect x="0" y="10" width="36" height="10" rx="3" fill="#f4692a" />
        <rect x="15" y="17" width="6" height="7" rx="2" fill="#cfcfcf" />
      </svg>
    </SideCell>
    <SideCell>
      <svg width="36" height="36" viewBox="0 0 36 36">
        <path d="M20 0h4v3h3V0h4v3h2V0h3v7l-3 3 1 11 2 2v2H21v-2l2-3 0-10-3-3z" fill="#b57fe8" />
        <circle cx="12" cy="9" r="6" fill="#c9c9c9" />
        <rect x="4" y="15" width="16" height="5" rx="2.500" fill="#8b8b8b" />
        <path d="M8 20h8l2 10H6z" fill="#b5b5b5" />
        <rect x="0" y="28" width="23" height="8" rx="3" fill="#7b7b7b" />
      </svg>
    </SideCell>
    <SideCell $drop={2}>
      <svg width="34" height="36" viewBox="0 0 34 36">
        <defs>
          <linearGradient id="mA" x1="0" y1="0" x2="0" y2="1">
            <stop offset="0" stopColor="#a87be0" />
            <stop offset="1" stopColor="#3d6be0" />
          </linearGradient>
          <linearGradient id="mC" x1="0" y1="0" x2="1" y2="0">
            <stop offset="0" stopColor="#c48bf0" />
            <stop offset="1" stopColor="#7d52b5" />
          </linearGradient>
        </defs>
        <path d="M16 1Q5 6 2 11v14q2 4 6 4 5-1 4-5V12q0-4 9-7z" fill="url(#mA)" />
        <path d="M16 1q3-1 6 1l9 6q2 2 2 5v6L20 11q-5 0-8 5 0-7 4-15" fill="#4fb7ee" />
        <path d="M33 18v6q0 3-3 5l-9 5q-4 2-8 0L5 29q6 1 10-2l8-5q4-3 2-8z" fill="url(#mC)" />
      </svg>
    </SideCell>
    <SideCell $drop={1}>
      <svg width="32" height="32" viewBox="0 0 32 32">
        <rect x="6" y="0" width="25" height="30" rx="2" fill="#28a8ea" />
        <path d="M6 0h13v10H6z" fill="#0f78d4" />
        <path d="M19 0h12v10H19z" fill="#50d9ff" />
        <path d="m32 16-14 8 12 8h2z" fill="#1490df" />
        <path d="M5 20 30 32H7q-2 0-2-2z" fill="#39b6f2" />
        <rect x="0" y="6" width="20" height="20" rx="2" fill="#0f6fcb" />
        <ellipse cx="10" cy="16" rx="4.300" ry="5.200" fill="none" stroke="#fff" strokeWidth="2.400" />
      </svg>
    </SideCell>
    <SideCell>
      <svg width="34" height="24" viewBox="0 0 34 24">
        <path d="M0 5 34 0 10 14z" fill="#43d1f8" />
        <path d="M34 0 24 24 14 15z" fill="#1e9be6" />
        <path d="M34 0 8 15l2 8 5-7z" fill="#0d6fc2" />
      </svg>
    </SideCell>
    <SideCell $h={50}>
      <SideRule />
    </SideCell>
    <SideCell $h={78}>
      <svg width="24" height="24" viewBox="0 0 24 24" stroke="#ececec" strokeWidth="2">
        <path d="M12 0v24M0 12h24" />
      </svg>
    </SideCell>
    <Push />
    <SideRule />
    <SideCell $drop={8}>
      <svg width="34" height="36" viewBox="0 0 34 36" fill="none" stroke="#f0f0f0" strokeWidth="2.200" strokeLinejoin="round">
        <path d="M13.500 1.500h7l1 5.500 3.500 2 5.500-2 2.500 6-4 3.500v3l4 3.500-2.500 6-5.500-2-3.500 2-1 5.500h-7l-1-5.500-3.500-2-5.500 2-2.500-6 4-3.500v-3l-4-3.500 2.500-6 5.500 2 3.500-2z" />
        <circle cx="17" cy="18" r="4.500" />
      </svg>
    </SideCell>
  </Side>
);

/* ---------- taskbar ---------- */

const Task = styled.div`
  flex: 1;
  display: flex;
  align-items: center;
  background: ${c.task};
  font-size: 23px;
  line-height: 32px;
`;

const Weather = styled.div`
  width: 999px;
  display: flex;
  align-items: center;
  gap: 19px;
  padding-left: 42px;
  small {
    display: block;
    font-size: inherit;
    color: #c4c4c4;
  }
`;

const Sun = styled.i`
  width: 40px;
  height: 40px;
  margin-top: -6px;
  border-radius: 50%;
  background: linear-gradient(135deg, #eebf30 10%, #f0a020 40%, #f26a0e 80%);
`;

const TaskButton = styled.div`
  position: relative;
  width: 88px;
  height: 80px;
  display: grid;
  place-items: center;
  ${(p) =>
    p.$active &&
    css`
      width: 80px;
      margin: 0 4px;
      border-radius: 8px;
      background: #2b2b2b;
      border: 2px solid #333;
    `}
  ${(p) =>
    p.$mark &&
    css`
      &::after {
        content: "";
        position: absolute;
        left: calc(50% - ${p.$active ? 16 : 6}px);
        bottom: ${p.$active ? 0 : 2}px;
        width: ${p.$active ? 32 : 12}px;
        height: 6px;
        border-radius: 3px;
        background: ${p.$active ? "#4cc2ff" : "#9a9a9a"};
      }
    `}
`;

const SearchPill = styled.div`
  width: 439px;
  height: 64px;
  margin: 0 5px 0 6px;
  display: flex;
  align-items: center;
  padding: 0 17px 0 21px;
  border-radius: 32px;
  background: #3c3c3c;
  border: 2px solid #505050;
  color: #d0d0d0;
  font-size: 26px;
  letter-spacing: -0.2px;
  span {
    flex: 1;
    margin-left: 20px;
  }
`;

const Tray = styled.div`
  margin-left: auto;
  padding-right: 23px;
  display: flex;
  align-items: center;
`;

const Clock = styled.div`
  width: 115px;
  text-align: right;
  white-space: nowrap;
`;

const Disc = styled.span`
  width: ${(p) => p.$size}px;
  height: ${(p) => p.$size}px;
  border-radius: 50%;
  background: ${(p) => p.$bg};
  display: grid;
  place-items: center;
`;

const Taskbar = () => (
  <Task>
    <Weather>
      <Sun />
      <div>
        80°F
        <small>Sunny</small>
      </div>
    </Weather>
    <TaskButton>
      <svg width="46" height="46" viewBox="0 0 46 46">
        <defs>
          <linearGradient id="win" x1="0" y1="0" x2="1" y2="1">
            <stop offset="0" stopColor="#7df6ff" />
            <stop offset="1" stopColor="#0a93f5" />
          </linearGradient>
        </defs>
        <path d="M3 0h19v22H0V3q0-3 3-3m21 0h19q3 0 3 3v19H24zM0 24h22v22H3q-3 0-3-3zm24 0h22v19q0 3-3 3H24z" fill="url(#win)" />
      </svg>
    </TaskButton>
    <SearchPill>
      <svg width="30" height="32" viewBox="0 0 30 32" fill="none" stroke="#e6e6e6" strokeWidth="3" strokeLinecap="round">
        <circle cx="13" cy="13" r="11" />
        <path d="m21 21 7 8" />
      </svg>
      <span>Search</span>
      <svg width="72" height="48" viewBox="0 0 72 48">
        <path d="M0 18 20 1q1-1 3 0l19 6q2 1 2 3v22L2 46q-2 0-2-2z" fill="#8a4a35" />
        <path d="M0 18 20 1q1-1 3 0l20 6q1 1 0 2L6 19q-4 1-6-1" fill="#a9654a" />
        <path d="M0 30 43 18v5L0 35z" fill="#d49a75" />
        <path d="M0 20 44 9v4L0 24z" fill="#6b3425" />
        <path d="M58 20q12-4 13 6 1 12-6 14-6 0-7-8z" fill="#96523a" />
        <path d="M58 19q9-5 12 5l-10 3z" fill="#e8c4a0" />
        <path d="M40 32q2-9 10-9t11 8q4 16-11 16T40 32" fill="#a65a3d" />
        <path d="M41 31q2-8 9-8 8 0 11 8-5 2-8 0-6 4-12 0" fill="#f0d2b0" />
      </svg>
    </SearchPill>
    <TaskButton>
      <svg width="48" height="44" viewBox="0 0 48 44">
        <rect y="12" width="36" height="32" rx="3" fill="#5f5f5f" />
        <rect x="12" width="36" height="32" rx="3" fill="#f1f1f1" />
        <path d="M12 12h24v20H15q-3 0-3-3z" fill="#b3b3b3" />
      </svg>
    </TaskButton>
    <TaskButton>
      <svg width="48" height="44" viewBox="0 0 48 44">
        <circle cx="40" cy="9" r="5.500" fill="#5059c9" />
        <circle cx="26" cy="7.500" r="7.500" fill="#7b83eb" />
        <path d="M34 17h14v14q0 8-7 9-4 0-7-3z" fill="#5059c9" />
        <path d="M14 17h24v16q-1 10-12 11-12-1-12-11z" fill="#7b83eb" />
        <rect y="10" width="24" height="25" rx="2.500" fill="#fff" />
        <path d="M7 16h11M12.500 16v14" stroke="#4b53bc" strokeWidth="3" />
      </svg>
    </TaskButton>
    <TaskButton $mark>
      <svg width="48" height="42" viewBox="0 0 48 42">
        <path d="M0 3q0-3 3-3h13q2 0 3 2l3 5H0z" fill="#e0a010" />
        <path d="M0 7h16l5-3h24q3 0 3 3v32q0 3-3 3H3q-3 0-3-3z" fill="#ffcf48" />
        <path d="M8 42V33q0-5 5-5h22q5 0 5 5v9z" fill="#0f7ac9" />
        <path d="M15 35.500h18" stroke="#0b4f8f" strokeWidth="2.400" />
      </svg>
    </TaskButton>
    <TaskButton $mark $active>
      <svg width="48" height="48" viewBox="0 0 48 48">
        <defs>
          <linearGradient id="edA" x1="0" y1="0" x2="1" y2=".5">
            <stop offset="0" stopColor="#2aa9e8" />
            <stop offset=".5" stopColor="#2fc5dc" />
            <stop offset="1" stopColor="#66e04c" />
          </linearGradient>
          <linearGradient id="edB" x1="0" y1="0" x2="1" y2="1">
            <stop offset="0" stopColor="#1b9de2" />
            <stop offset="1" stopColor="#0c59a4" />
          </linearGradient>
        </defs>
        <path d="M1 20C3 8 12 0 24 0c14 0 24 10 24 20 0 8-6 12-13 12-5 0-7-1-7-3 0-1 2-2 2-6 0-6-6-11-14-11C9 12 3 15 1 20" fill="url(#edA)" />
        <path d="M0 24C0 16 7 12 15 12c9 0 15 5 15 11 0-3-12-4-12 7 0 8 7 14 16 14 4 0 7-1 9-2-4 4-11 6-19 6C11 48 0 38 0 24" fill="url(#edB)" />
        <path d="M18 17C12 20 9 25 9 31c0 9 7 15 14 17 8 1 17-2 22-9-3 2-6 3-10 3-9 0-16-6-16-13 0-3 1-5 3-7 1-2-1-5-4-5" fill="#1160b0" />
      </svg>
    </TaskButton>
    <TaskButton>
      <svg width="46" height="48" viewBox="0 0 46 48">
        <path d="M11 10V4q0-3 3-3h18q3 0 3 3v6" fill="none" stroke="#1fa8f0" strokeWidth="3.600" />
        <path d="M0 8h46v33q0 7-7 7H7q-7 0-7-7z" fill="#eeeeee" />
        <path d="M13 17h9v9h-9z" fill="#f25022" />
        <path d="M24 17h9v9h-9z" fill="#7fba00" />
        <path d="M13 28h9v9h-9z" fill="#00a4ef" />
        <path d="M24 28h9v9h-9z" fill="#ffb900" />
      </svg>
    </TaskButton>
    <TaskButton>
      <Disc $bg="#5865f2" $size={48}>
        <FaDiscord size={29} />
      </Disc>
    </TaskButton>
    <TaskButton $mark>
      <svg width="46" height="44" viewBox="0 0 46 44">
        <circle cx="23" cy="22" r="20" fill="#fff" stroke="#fff" strokeWidth="3.500" strokeDasharray="6 4.470" strokeLinecap="round" />
        <path d="M27 19q8-2 8 9l-5-2z" fill="#34a853" />
        <path d="m22 14-8 21M24 14l8 21M15 26q8 5 16 0" fill="none" stroke="#3b7ded" strokeWidth="4" />
        <circle cx="23" cy="13" r="3" fill="#fff" stroke="#1b2b3a" strokeWidth="2.500" />
        <path d="M23 7v3" stroke="#1b2b3a" strokeWidth="2.500" />
      </svg>
    </TaskButton>
    <TaskButton $mark>
      <Disc $bg="linear-gradient(#9130ad, #5c2a86)" $size={45}>
        <FaGithub size={33} />
      </Disc>
    </TaskButton>
    <Tray>
      <BarCell $w={64}>
        <svg width="24" height="14" viewBox="0 0 24 14" fill="none" stroke="#fff" strokeWidth="2.400">
          <path d="m1 13 11-11 11 11" />
        </svg>
      </BarCell>
      <BarCell $w={64}>
        <svg width="32" height="26" viewBox="0 0 32 26">
          <path d="M8 10a9 9 0 0 1 17-2l-7 8z" fill="#5f5f5f" />
          <path d="M7 22q-7 0-7-7t8-6q5 0 8 4l7-4q9 0 9 7 0 6-6 6z" fill="#9b9b9b" />
          <path d="m5 0 24 25" stroke={c.task} strokeWidth="5" />
          <path d="m5 0 24 25" stroke="#fff" strokeWidth="2.200" />
        </svg>
      </BarCell>
      <BarCell $w={64}>
        <svg width="32" height="24" viewBox="0 0 32 24" fill="none" stroke="#fff" strokeWidth="2.200" strokeLinecap="round">
          <path d="M1 8.500a21 21 0 0 1 30 0M5.500 13.500a14.800 14.800 0 0 1 21 0M10 18a8.500 8.500 0 0 1 12 0" />
          <circle cx="16" cy="21" r="2" fill="#fff" />
        </svg>
      </BarCell>
      <BarCell $w={32}>
        <svg width="32" height="28" viewBox="0 0 32 28" fill="none" stroke="#fff" strokeWidth="2" strokeLinecap="round" strokeLinejoin="round">
          <path d="M1 10h5l7-7v22l-7-7H1zM17 9.500q3 4.500 0 9" />
          <path d="M21 6q6 8 0 16M25 2q10 12 0 24" stroke="#5a5a5a" />
        </svg>
      </BarCell>
      <BarCell $w={64}>
        <svg width="34" height="28" viewBox="0 0 34 28">
          <path d="M17 7h9q3 0 3 3v11q0 4-4 4H3" fill="none" stroke="#fff" strokeWidth="2.200" />
          <path d="M30 12h2q2 0 2 2v3q0 2-2 2h-2z" fill="#fff" />
          <path d="M8 0q8 5 7 12 0 7-8 8l-5 3-2-1 2-3Q-2 8 8 0" fill="#fff" />
          <path d="M18 11v8q-1 2-5 3" stroke="#fff" strokeWidth="4" fill="none" />
        </svg>
      </BarCell>
      <Clock>
        12:48 PM
        <br />
        7/7/2024
      </Clock>
      <BarCell $w={62}>
        <svg width="26" height="30" viewBox="0 0 26 30" fill="#99ebff">
          <path d="M13 0q10 1 10 11v6l3 5v2H0v-2l3-5v-6Q3 1 13 0M8 26h10q-1 4-5 4t-5-4" />
        </svg>
      </BarCell>
      <BarCell $w={82}>
        <svg width="48" height="46" viewBox="0 0 48 46">
          <defs>
            <linearGradient id="preA" x1="0" y1="0" x2="0" y2="1">
              <stop offset="0" stopColor="#1e8ff0" />
              <stop offset=".55" stopColor="#3fae8a" />
              <stop offset="1" stopColor="#f0c020" />
            </linearGradient>
            <linearGradient id="preB" x1="1" y1="0" x2="0" y2="1">
              <stop offset="0" stopColor="#9a4ff0" />
              <stop offset="1" stopColor="#f86f6a" />
            </linearGradient>
          </defs>
          <path d="M22 0h6q5 1 7 9l3 6-12-1z" fill="#1238c8" />
          <path d="M12 0h17q-4 1-6 9l-5 18q-1 4-5 4H5q-6-1-5-8L5 6q2-6 7-6" fill="url(#preA)" />
          <path d="M9 31h10q4-1 5-5l4-11q1-3 5-3h8q7 1 6 8l-4 13H14q-4 0-5-2" fill="url(#preB)" />
          <rect x="11" y="31" width="37" height="15" rx="3.500" fill="#ffc80a" />
          <text x="16" y="43.500" fontFamily="Open Sans, sans-serif" fontWeight="700" fontSize="13.500" textLength="27" fill="#111">PRE</text>
        </svg>
      </BarCell>
    </Tray>
  </Task>
);

export default function App() {
  return (
    <Screen>
      <Global />
      <TabStrip />
      <Toolbar />
      <Body>
        <Dashboard />
        <Sidebar />
      </Body>
      <Taskbar />
    </Screen>
  );
}
